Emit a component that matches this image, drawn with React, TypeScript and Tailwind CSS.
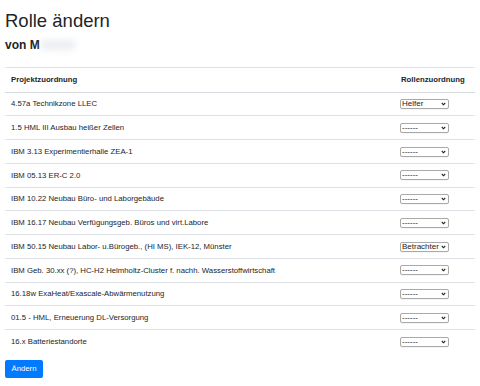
import React from "react";

const rows: { name: string; role: string }[] = [
  { name: "4.57a Technikzone LLEC", role: "Helfer" },
  { name: "1.5 HML III Ausbau heißer Zellen", role: "------" },
  { name: "IBM 3.13 Experimentierhalle ZEA-1", role: "------" },
  { name: "IBM 05.13 ER-C 2.0", role: "------" },
  { name: "IBM 10.22 Neubau Büro- und Laborgebäude", role: "------" },
  { name: "IBM 16.17 Neubau Verfügungsgeb. Büros und virt.Labore", role: "------" },
  { name: "IBM 50.15 Neubau Labor- u.Bürogeb., (HI MS), IEK-12, Münster", role: "Betrachter" },
  { name: "IBM Geb. 30.xx (?), HC-H2 Helmholtz-Cluster f. nachh. Wasserstoffwirtschaft", role: "------" },
  { name: "16.18w ExaHeat/Exascale-Abwärmenutzung", role: "------" },
  { name: "01.5 - HML, Erneuerung DL-Versorgung", role: "------" },
  { name: "16.x Batteriestandorte", role: "------" },
];

function Select({ value }: { value: string }) {
  return (
    <div className="flex items-center w-[49px] h-[10px] border border-[#a9a9a9] rounded-[2px] bg-white pl-[1px] pr-[2px] shadow-[0_0.5px_0.5px_rgba(0,0,0,0.08)]">
      <span className="flex-1 text-[8px] leading-[8px] text-[#222] overflow-hidden whitespace-nowrap">
        {value}
      </span>
      <svg width="5" height="4" viewBox="0 0 5 4" className="shrink-0">
        <path d="M0.8 1 L2.5 2.8 L4.2 1" fill="none" stroke="#222" strokeWidth="1.1" />
      </svg>
    </div>
  );
}

export default function App() {
  return (
    <div
      className="w-[480px] h-[386px] bg-white text-[#212529] px-[5px] pt-[9px] overflow-hidden"
      style={{ fontFamily: '"Liberation Sans", Arial, sans-serif' }}
    >
      <h1 className="text-[18.5px] leading-[24px] font-normal">Rolle ändern</h1>
      <h3 className="mt-[5px] text-[12px] leading-[14px] font-semibold flex items-center">
        von M
        <span className="inline-block ml-[1px] w-[34px] h-[10px] bg-gray-300 opacity-40 blur-[3px]" />
      </h3>

      <div className="mt-[15px]">
        <div className="flex items-center h-[24.7px] border-t border-[#dee2e6] text-[7.75px] font-bold">
          <div className="flex-1 pl-[6px]">Projektzuordnung</div>
          <div className="w-[80px] pl-[6px]">Rollenzuordnung</div>
        </div>
        {rows.map((r, i) => (
          <div
            key={i}
            className={
              "flex items-center h-[23.75px] border-t text-[7.75px] " +
              (i === 0 ? "border-[#d6dadf]" : "border-[#dee2e6]")
            }
          >
            <div className="flex-1 pl-[6px] whitespace-nowrap overflow-hidden">{r.name}</div>
            <div className="w-[80px] pl-[5px]">
              <Select value={r.role} />
            </div>
          </div>
        ))}
      </div>

      <button className="mt-[7px] w-[38px] h-[18px] bg-[#007bff] text-white text-[7.75px] rounded-[2px] flex items-center justify-center">
        Ändern
      </button>
    </div>
  );
}
